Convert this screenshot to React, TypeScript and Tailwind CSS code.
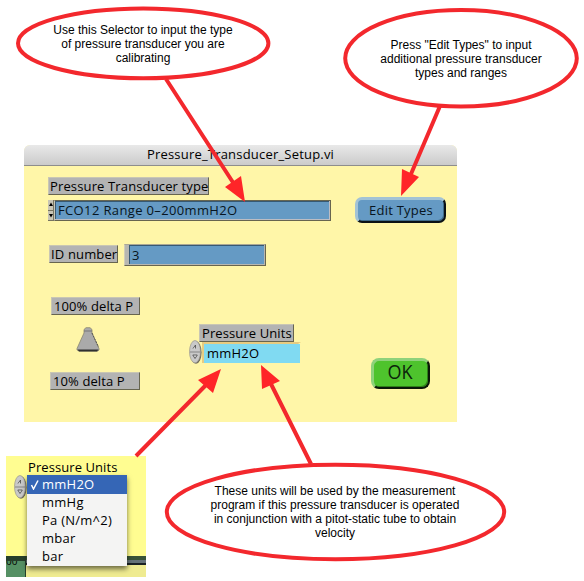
import React from "react";

const raised =
  "bg-[#b3b3b3] border-t border-l border-r border-b border-t-[#c9c6b4] border-l-[#c9c6b4] border-r-[#67654f] border-b-[#67654f]";

function Label({ className, children }: { className: string; children: React.ReactNode }) {
  return (
    <div className={`${raised} flex items-center whitespace-nowrap text-[13px] leading-none ${className}`}>
      {children}
    </div>
  );
}

function OvalSpinner() {
  return (
    <svg className="h-6 w-[13px] shrink-0" viewBox="0 0 13 24">
      <ellipse cx="7" cy="12.5" rx="5.6" ry="11.2" fill="#6d6a5c" />
      <ellipse cx="6" cy="11.7" rx="5.5" ry="11.2" fill="#c9c9c9" stroke="#99978c" strokeWidth=".7" />
      <path d="M1 12h10" stroke="#858585" />
      <path d="M4 8.5 6.5 5v3.5M3.8 15h4.5L6 18.5z" fill="#ddd" stroke="#555" strokeWidth=".9" />
    </svg>
  );
}

function SetupWindow() {
  return (
    <div className="absolute left-[24px] top-[145px] h-[277px] w-[433px] overflow-hidden rounded-t-[6px] bg-[#fff6a8]">
      <div className="flex h-[21px] items-center justify-center border-b border-[#8d8d8d] bg-linear-to-b from-[#e9e9e9] to-[#cbcbcb] text-[13px] leading-none">
        <span className="-mt-px tracking-[0.2px]">Pressure_Transducer_Setup.vi</span>
      </div>
      <div className="flex h-[57px] pl-6">
        <div className="w-[307px] pt-[11px]">
          <Label className="h-[18px] w-[161px] pl-px tracking-[0.14px]">Pressure Transducer type</Label>
          <div className="mt-[5px] flex h-[21px] w-[283px]">
            <svg className="h-[21px] w-[6px]" viewBox="0 0 6 21">
              <path fill="#c8c5b5" d="M0 0h6v21H0z" />
              <path d="M5.5 0v21M0 10.5h6M0 20.5h6" stroke="#777460" />
              <path d="M1 6 3 2.5 5 6zM1 14h4l-2 3.5z" fill="#000" />
            </svg>
            <div className="flex flex-1 border border-b-[#67654f] border-l-[#c8c7b8] border-r-[#67654f] border-t-[#67654f] bg-[#bdbdc3] pb-px pr-px">
              <div className="flex flex-1 items-center border-l border-t border-[#365974] bg-[#659ac4] pl-0.5 text-[13px] leading-none">
                <span className="tracking-[0.36px] text-[#071521]">FCO12 Range 0–200mmH2O</span>
              </div>
            </div>
          </div>
        </div>
        <button className="mt-[31px] flex h-[26px] w-[91px] items-center justify-center rounded-[7px] border-b-2 border-l-[3px] border-r-2 border-t-[3px] border-b-[#0b1115] border-l-[#a3c3d5] border-r-[#0b1115] border-t-[#a3c3d5] bg-[#659ac4] text-[13px] leading-none text-[#071521] shadow-[inset_-1px_-1px_0_#406b8a]">
          <span className="tracking-[0.25px]">Edit Types</span>
        </button>
      </div>
      <div className="flex pl-[25px] pt-[21px]">
        <Label className="mt-px h-[18px] w-[69px] pl-px tracking-[0.15px]">ID number</Label>
        <div className="ml-1.5 flex h-[22px] w-[142px] border border-b-[#67654f] border-l-[#d1ceb8] border-r-[#67654f] border-t-[#aaa794] bg-[#b7b7b1] pb-px pl-1 pr-px">
          <div className="flex flex-1 items-center border-l border-t border-[#365974] bg-[#659ac4] pl-0.5 text-[13px] leading-none text-[#071521]">3</div>
        </div>
      </div>
      <div className="flex">
        <div className="w-[165px] pl-[27px] pt-[31px]">
          <Label className="h-[18px] w-[89px] pl-0.5 tracking-[0.1px]">100% delta P</Label>
          <svg className="ml-[25px] mt-3 h-[26px] w-6" viewBox="0 0 24 26">
            <path
              d="M8 6V2.5L10 .7h4l2 1.8V6l7 15.5V23l-1 1H3l-2-1v-1.5z"
              fill="#aaa"
              stroke="#898670"
              strokeWidth=".8"
            />
            <path d="M8 4h8" stroke="#777" />
            <path d="m16 6 6.5 14" stroke="#555" strokeDasharray="2 1" />
            <path d="M1.5 22.5h21l-1.5 2H3z" fill="#303030" />
          </svg>
          <Label className="-ml-px mt-[19px] h-[18px] w-[90px] pl-0.5 tracking-[0.1px]">10% delta P</Label>
        </div>
        <div className="flex w-[182px] items-start pt-[58px]">
          <div className="mt-[16px] h-6 w-[13px]"><OvalSpinner /></div>
          <div>
            <Label className="ml-[-3px] h-[18px] w-[95px] pl-0.5 tracking-[0.1px]">Pressure Units</Label>
            <svg className="block h-0.5 w-[99px]" viewBox="0 0 99 2">
              <path d="M0 0h99l-3 2H0z" fill="#e7cc81" />
            </svg>
            <div className="w-[98px] border-l-2 border-[#e7cc81]">
              <div className="flex h-[19px] items-center bg-[#80daf2] pl-[3px] text-[13px] leading-none">
                <span className="tracking-[0.2px]">mmH2O</span>
              </div>
            </div>
          </div>
        </div>
        <button className="mt-[92px] flex h-[31px] w-[59px] items-center justify-center rounded-[8px] border-b-2 border-l-[3px] border-r-2 border-t-[3px] border-b-[#0a1608] border-l-[#8ed27b] border-r-[#0a1608] border-t-[#8ed27b] bg-[#4ec32d] text-[20px] leading-none text-[#0b240a] shadow-[inset_-1px_-1px_0_#2f7f19]">
          <span className="-ml-0.5 -mt-1 scale-x-[0.9]">OK</span>
        </button>
      </div>
    </div>
  );
}

const units = ["mmH2O", "mmHg", "Pa (N/m^2)", "mbar", "bar"];

function UnitsMenu() {
  return (
    <div className="absolute left-[6px] top-[456px] h-[121px] w-[140px] bg-[#fffd91]">
      <div className="h-[19px] pl-[22px] pt-[5px] text-[13px] leading-none tracking-[0.08px]">
        Pressure Units
      </div>
      <div className="flex h-[81px] pl-2"><OvalSpinner /></div>
      <div className="flex h-[21px]">
        <div className="w-5 overflow-hidden border-r border-t-[5px] border-[#263f2b] bg-[#559064] text-[10px] leading-[0px]">00</div>
        <div className="flex-1 bg-[#efeb91]">
          <div className="h-[9px] border-b-2 border-t-4 border-b-[#1b2225] border-t-[#385338] bg-[#657278]" />
        </div>
      </div>
      <div className="absolute left-[21px] top-[19px] w-[100px] bg-[#f4f4f3] shadow-[0_3px_5px_rgba(0,0,0,.55)]">
        {units.map((unit, i) => (
          <div
            key={unit}
            className={
              i === 0
                ? "flex h-[19px] items-center bg-[#3566b6] text-[13px] leading-none text-white"
                : "flex h-[18px] items-center pb-px text-[13px] leading-none text-black"
            }
          >
            <div className="w-[15px] pl-[3px]">
              {i === 0 && (
                <svg className="size-[10px]" viewBox="0 0 10 10" fill="none">
                  <path d="m1.5 5 2 4L8 .5" stroke="#fff" strokeWidth="1.5" />
                </svg>
              )}
            </div>
            <span className="tracking-[0.25px]">{unit}</span>
          </div>
        ))}
      </div>
    </div>
  );
}

function Note({ className, lines }: { className: string; lines: string[] }) {
  return (
    <div className={`absolute text-center font-['Liberation_Sans',Arial,sans-serif] text-[12px] leading-[14px] whitespace-nowrap ${className}`}>
      {lines.map((line) => (
        <div key={line}>{line}</div>
      ))}
    </div>
  );
}

export default function App() {
  return (
    <div className="relative h-[581px] w-[584px] overflow-hidden bg-white font-['Open_Sans','Noto_Sans',sans-serif] text-black">
      <SetupWindow />
      <UnitsMenu />
      <svg className="absolute left-0 top-0" width="584" height="581" viewBox="0 0 584 581">
        <g fill="none" stroke="#f3282d" strokeWidth="4">
          <ellipse cx="143.2" cy="43.3" rx="125.2" ry="34.9" />
          <ellipse cx="461" cy="58.3" rx="115.8" ry="48.2" />
          <ellipse cx="335.5" cy="512" rx="168.7" ry="47.3" />
          <path d="M166 79 234 184M440 106l-29 68M136 456l70-71M311 464l-40-80" />
        </g>
        <path fill="#ff2528" d="m245 202-20-15 16-11zM401 196l1-27 17 8zM221 369l-23 11 15 13zM261 365l1 24 18-8z" />
      </svg>
      <Note className="left-[43px] top-[23px] w-[200px]" lines={["Use this Selector to input the type", "of pressure transducer you are", "calibrating"]} />
      <Note className="left-[361px] top-[38px] w-[200px]" lines={['Press "Edit Types" to input', "additional pressure transducer", "types and ranges"]} />
      <Note
        className="left-[185px] top-[484px] w-[300px]"
        lines={[
          "These units will be used by the measurement",
          "program if this pressure transducer is operated",
          "in conjunction with a pitot-static tube to obtain",
          "velocity",
        ]}
      />
    </div>
  );
}
